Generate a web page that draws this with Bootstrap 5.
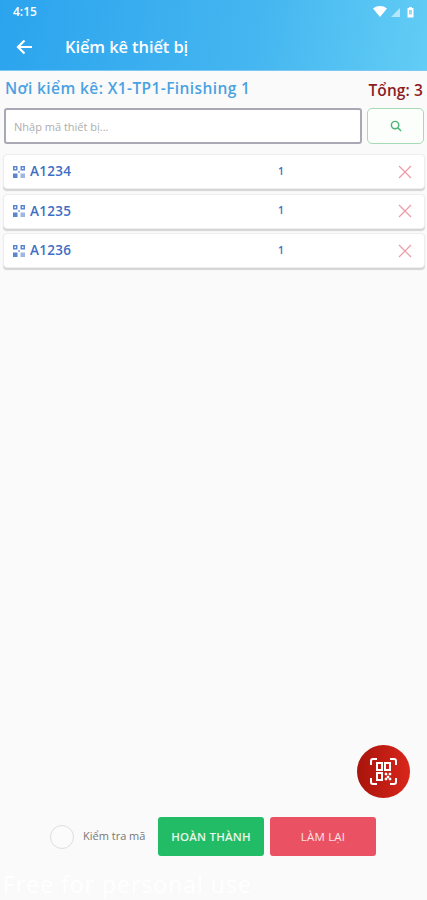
<!DOCTYPE html>
<html lang="vi">
<head>
    <meta charset="UTF-8">
    <meta name="viewport" content="width=device-width, initial-scale=1.0">
    <title>Kiểm kê thiết bị</title>
    <link href="https://cdn.jsdelivr.net/npm/bootstrap@5.3.0/dist/css/bootstrap.min.css" rel="stylesheet">
    <style>
        body { font-family: "Open Sans", "Liberation Sans", sans-serif; background: #fafafa; }
        .app-page { height: 900px; width: 427px; overflow: hidden; position: relative; }
        .app-head { height: 71px; background: linear-gradient(100deg, #2ba4ee 0%, #45b6f0 60%, #62cdf5 100%); color: #fff; border-bottom: 1px solid #7cc8f2; }
        .status-row { height: 24px; padding: 0 12px 0 13px; font-size: 12px; font-weight: 600; }
        .title-row { height: 46px; padding-left: 16px; }
        .title-text { font-size: 16.5px; font-weight: 600; margin-left: 32px; letter-spacing: -.1px; }
        .info-row { padding: 6px 4px 0 5px; height: 37px; }
        .place-text { color: #4aa2e2; font-size: 15.5px; font-weight: 600; letter-spacing: .4px; }
        .total-text { color: #8c1c24; font-size: 15.5px; font-weight: 600; margin-top: 2px; letter-spacing: .1px; }
        .search-row { padding: 0 3px 0 4px; gap: 5px; height: 36px; }
        .code-input.form-control { height: 36px; border: 2px solid #a9a9b5; border-radius: 3px; font-size: 11px; padding: 0 8px; background: #fff; box-shadow: none; }
        .code-input::placeholder { color: #adadad; }
        .search-btn.btn { width: 57px; flex: none; height: 36px; padding: 0; border: 1px solid #a5dbb5; border-radius: 5px; background: #fcfefc; }
        .item-list { padding: 10px 2px 0 3px; gap: 4.5px; }
        .item-row { height: 35px; background: #fff; border: 1px solid #eeeeee; border-radius: 4px; box-shadow: 0 1.5px 1px #d4d4d4; padding: 0 12px 0 9px; color: #3f6fc4; font-size: 13.5px; font-weight: 600; }
        .item-code { width: 248px; letter-spacing: .3px; margin-left: 5px; }
        .item-qty { font-size: 10.5px; }
        .scan-fab { position: absolute; left: 357px; top: 745px; width: 53px; height: 53px; border-radius: 50%; background: linear-gradient(90deg, #a8140c, #d9261a); }
        .foot-row { margin-top: auto; margin-bottom: 44px; padding-left: 50px; height: 39px; }
        .check-ring { width: 24px; height: 24px; border: 1px solid #dedede; border-radius: 50%; background: #fbfbfb; margin-right: 9px; flex: none; }
        .check-label { font-size: 11px; color: #777; width: 75px; }
        .done-btn.btn, .redo-btn.btn { height: 39px; width: 106px; padding: 0; border: 0; border-radius: 3px; color: #e8f5ea; font-size: 11.5px; font-weight: 600; letter-spacing: .2px; }
        .done-btn.btn { background: #22bb66; margin-right: 6px; }
        .redo-btn.btn { background: #ea5264; font-weight: 400; color: #fbe4e6; }
        .free-mark { position: absolute; left: 3px; top: 871px; color: #fff; font-size: 23px; letter-spacing: 1px; line-height: 26px; }
    </style>
</head>
<body>
    <div class="app-page d-flex flex-column">
        <div class="app-head">
            <div class="status-row d-flex justify-content-between align-items-center">
                <span>4:15</span>
                <svg width="42" height="12" viewBox="0 0 42 12">
                    <path d="M0 2.5C4-.8 10-.8 14 2.5L7 11Z" fill="#fff"/>
                    <path d="M27 2V11H18Z" fill="#fff" opacity=".55"/>
                    <path d="M34.5 2H36V1H39V2H40.5V11.5H34.5Z" fill="#fff"/>
                    <rect x="36" y="4" width="3" height="4.5" fill="#9adcf6"/>
                </svg>
            </div>
            <div class="title-row d-flex align-items-center">
                <svg width="17" height="16" viewBox="0 0 17 16" fill="none" stroke="#fff" stroke-width="2.2">
                    <path d="M16 8H2M8.5 1.5 2 8l6.5 6.5"/>
                </svg>
                <span class="title-text">Kiểm kê thiết bị</span>
            </div>
        </div>

        <div class="info-row d-flex justify-content-between">
            <span class="place-text">Nơi kiểm kê: X1-TP1-Finishing 1</span>
            <span class="total-text">Tổng: 3</span>
        </div>

        <div class="search-row d-flex">
            <input class="form-control code-input" type="text" placeholder="Nhập mã thiết bị...">
            <button class="btn search-btn d-flex align-items-center justify-content-center" type="button" aria-label="Tìm">
                <svg width="12" height="12" viewBox="0 0 13 13" fill="none" stroke="#4cb574" stroke-width="1.6">
                    <circle cx="5.5" cy="5.5" r="4"/>
                    <path d="M8.5 8.5 12 12"/>
                </svg>
            </button>
        </div>

        <div id="items" class="item-list d-flex flex-column"></div>

        <div class="foot-row d-flex align-items-center">
            <span class="check-ring"></span>
            <span class="check-label">Kiểm tra mã</span>
            <button class="btn done-btn" type="button">HOÀN THÀNH</button>
            <button class="btn redo-btn" type="button">LÀM LẠI</button>
        </div>

        <div class="scan-fab d-flex align-items-center justify-content-center">
            <svg width="27" height="27" viewBox="0 0 27 27" fill="none" stroke="#fff">
                <path d="M1 7V3a2 2 0 0 1 2-2h4M20 1h4a2 2 0 0 1 2 2v4M26 20v4a2 2 0 0 1-2 2h-4M7 26H3a2 2 0 0 1-2-2v-4" stroke-width="2"/>
                <rect x="7" y="5" width="5" height="7" stroke-width="2"/>
                <rect x="15" y="5" width="5" height="7" stroke-width="2"/>
                <rect x="7" y="15" width="5" height="7" stroke-width="2"/>
                <path d="M15 15h2v2h-2zM19 15h2v2h-2zM17 18h2v2h-2zM15 20h2v2h-2zM19 20h2v2h-2z" fill="#fff" stroke-width=".5"/>
            </svg>
        </div>
        <div class="free-mark">Free for personal use</div>
    </div>

    <script>
        const codes = ['A1234', 'A1235', 'A1236'];
        const qrIcon = `<svg width="12" height="12" viewBox="0 0 12 12" fill="#5b86cf">
            <rect x="0" y="0" width="4.5" height="4.5"/><rect x="7.5" y="0" width="4.5" height="4.5"/>
            <rect x="0" y="7.5" width="4.5" height="4.5"/><rect x="7.5" y="7.5" width="4.5" height="4.5" opacity=".6"/>
            <rect x="5" y="5" width="2" height="2" opacity=".6"/>
            <rect x="1.5" y="1.5" width="1.5" height="1.5" fill="#fff"/><rect x="9" y="1.5" width="1.5" height="1.5" fill="#fff"/>
        </svg>`;
        const closeIcon = `<svg class="ms-auto" width="14" height="14" viewBox="0 0 14 14" stroke="#ec9aa6" stroke-width="1.2"><path d="M1 1l12 12M13 1 1 13"/></svg>`;
        document.getElementById('items').innerHTML = codes.map(code =>
            `<div class="item-row d-flex align-items-center">${qrIcon}<span class="item-code">${code}</span><span class="item-qty">1</span>${closeIcon}</div>`
        ).join('');
    </script>
    <script src="https://cdn.jsdelivr.net/npm/bootstrap@5.3.0/dist/js/bootstrap.bundle.min.js"></script>
</body>
</html>
